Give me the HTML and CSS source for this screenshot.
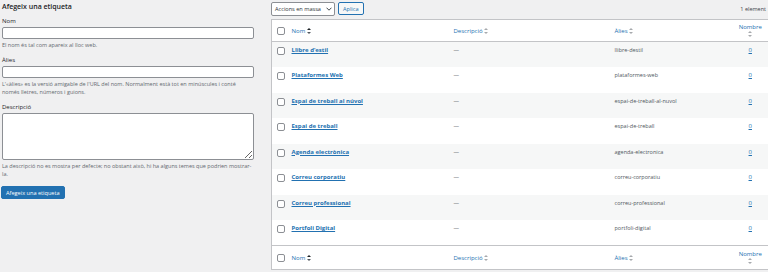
FILE: index.html
```html
<!DOCTYPE html>
<html lang="ca">
<head>
    <meta charset="UTF-8">
    <meta name="viewport" content="width=device-width, initial-scale=1.0">
    <link rel="stylesheet" href="styles.css">
    <title>Etiquetes</title>
</head>
<body>
    <div class="wrap">
        <div class="col-left">
            <h2 class="form-title">Afegeix una etiqueta</h2>
            <div class="form-field">
                <label for="tag-name">Nom</label>
                <input type="text" id="tag-name">
                <p class="help">El nom és tal com apareix al lloc web.</p>
            </div>
            <div class="form-field">
                <label for="tag-slug">Àlies</label>
                <input type="text" id="tag-slug">
                <p class="help">L'«àlies» es la versió amigable de l'URL del nom. Normalment està tot en minúscules i conté només lletres, números i guions.</p>
            </div>
            <div class="form-field">
                <label for="tag-desc">Descripció</label>
                <textarea id="tag-desc"></textarea>
                <p class="help">La descripció no es mostra per defecte; no obstant això, hi ha alguns temes que podrien mostrar-la.</p>
            </div>
            <button class="button-primary">Afegeix una etiqueta</button>
        </div>

        <div class="col-right">
            <div class="tablenav">
                <div class="actions">
                    <div class="select">Accions en massa
                        <svg width="6" height="4" viewBox="0 0 6 4"><path d="M0.5 0.7 L3 3.2 L5.5 0.7" fill="none" stroke="#2c3338" stroke-width="0.9"/></svg>
                    </div>
                    <button class="button">Aplica</button>
                </div>
                <span class="count">1 element</span>
            </div>

            <table class="list-table">
                <thead>
                    <tr>
                        <th class="col-cb"><span class="cb"></span></th>
                        <th class="col-name"><a href="#">Nom <span class="sort sorted"></span></a></th>
                        <th class="col-desc"><a href="#">Descripció <span class="sort"></span></a></th>
                        <th class="col-slug"><a href="#">Àlies <span class="sort"></span></a></th>
                        <th class="col-num"><a href="#">Nombre<br><span class="sort"></span></a></th>
                    </tr>
                </thead>
                <tbody id="rows"></tbody>
                <tfoot>
                    <tr>
                        <th class="col-cb"><span class="cb"></span></th>
                        <th class="col-name"><a href="#">Nom <span class="sort sorted"></span></a></th>
                        <th class="col-desc"><a href="#">Descripció <span class="sort"></span></a></th>
                        <th class="col-slug"><a href="#">Àlies <span class="sort"></span></a></th>
                        <th class="col-num"><a href="#">Nombre<br><span class="sort"></span></a></th>
                    </tr>
                </tfoot>
            </table>
        </div>
    </div>

    <script>
        // tags shown in the list
        const tags = [
            ['Llibre d\u2019estil', 'llibre-destil'],
            ['Plataformes Web', 'plataformes-web'],
            ['Espai de treball al núvol', 'espai-de-treball-al-nuvol'],
            ['Espai de treball', 'espai-de-treball'],
            ['Agenda electrònica', 'agenda-electronica'],
            ['Correu corporatiu', 'correu-corporatiu'],
            ['Correu professional', 'correu-professional'],
            ['Portfoli Digital', 'portfoli-digital']
        ];

        const tbody = document.getElementById('rows');
        tags.forEach(tag => {
            const tr = document.createElement('tr');
            tr.innerHTML = `
                <td class="col-cb"><span class="cb"></span></td>
                <td class="col-name"><a href="#" class="row-title">${tag[0]}</a></td>
                <td class="col-desc">&mdash;</td>
                <td class="col-slug">${tag[1]}</td>
                <td class="col-num"><a href="#">0</a></td>`;
            tbody.appendChild(tr);
        });
    </script>
</body>
</html>
```

FILE: styles.css
```css
*{
    box-sizing: border-box;
    margin: 0;
    padding: 0;
}
body{
    background: #f0f0f1;
    font-family: 'Open Sans', 'Noto Sans', sans-serif;
    font-size: 6px;
    color: #3c434a;
}
a{
    color: #2271b1;
    text-decoration: none;
}

.wrap{
    display: flex;
    gap: 17px;
}

/* left form */
.col-left{
    width: 252px;
    margin-left: 2px;
    flex-shrink: 0;
}
.form-title{
    font-size: 7px;
    font-weight: 600;
    color: #1d2327;
    line-height: 9px;
    margin-top: 2px;
    margin-bottom: 6px;
}
.form-field label{
    display: block;
    line-height: 8px;
    margin-bottom: 2px;
    color: #1d2327;
}
.form-field input,
.form-field textarea{
    display: block;
    width: 100%;
    height: 12px;
    border: 1px solid #8c8f94;
    border-radius: 2px;
    background: #fff;
}
.form-field textarea{
    height: 47px;
    resize: vertical;
}
.help{
    color: #646970;
    font-size: 5.5px;
    line-height: 8px;
    margin-top: 2px;
    margin-bottom: 7px;
}
.button-primary{
    background: #2271b1;
    color: #fff;
    border: 1px solid #2271b1;
    border-radius: 2px;
    font-family: inherit;
    font-size: 5.6px;
    height: 13px;
    padding: 0 4px;
    margin-top: 1px;
    margin-left: -1px;
}

/* right list */
.col-right{
    flex: 1;
}
.tablenav{
    display: flex;
    justify-content: space-between;
    align-items: center;
    height: 19px;
    padding-bottom: 3px;
    padding-top: 1px;
}
.actions{
    display: flex;
    gap: 3px;
    align-items: center;
}
.select{
    display: flex;
    align-items: center;
    justify-content: space-between;
    white-space: nowrap;
    width: 64px;
    height: 14px;
    padding: 0 2px 0 3px;
    background: #fff;
    border: 1px solid #8c8f94;
    border-radius: 2px;
    color: #2c3338;
    font-size: 5.6px;
}
.button{
    height: 13px;
    padding: 0 4px;
    font-family: inherit;
    font-size: 5.6px;
    color: #2271b1;
    background: #f6f7f7;
    border: 1px solid #2271b1;
    border-radius: 2px;
}
.count{
    color: #3c434a;
    font-size: 5.5px;
    padding-right: 2px;
}

.list-table{
    width: 100%;
    border-collapse: collapse;
    background: #fff;
    border: 1px solid #c3c4c7;
    border-right: none;
    table-layout: fixed;
}
.list-table th{
    font-weight: normal;
    text-align: left;
    height: 22px;
    padding: 0 4px;
    vertical-align: middle;
    border-bottom: 1px solid #c3c4c7;
}
.list-table tfoot th{
    height: 24px;
    border-bottom: none;
    border-top: 1px solid #c3c4c7;
}
.list-table td{
    height: 25.5px;
    padding: 4px 4px 0;
    vertical-align: top;
    line-height: 9px;
    color: #50575e;
    font-size: 5.5px;
}
.list-table tbody tr:nth-child(odd){
    background: #f6f7f7;
}

.col-cb{
    width: 16px;
}
.list-table th.col-cb,
.list-table td.col-cb{
    padding: 0 0 0 5px;
}
.list-table td.col-cb{
    padding-top: 5px;
}
.col-name{
    width: 162px;
}
.col-desc{
    width: 161px;
}
.col-slug{
    width: 122px;
}
.list-table .col-num{
    text-align: center;
    line-height: 7px;
}
.list-table td.col-num{
    line-height: 9px;
    font-size: 6px;
}
td.col-num a{
    text-decoration: underline;
}

.cb{
    display: block;
    width: 8px;
    height: 8px;
    border: 1px solid #8c8f94;
    border-radius: 2px;
    background: #fff;
}

.row-title{
    font-weight: 700;
    font-size: 6px;
    text-decoration: underline;
}

.sort{
    display: inline-block;
    width: 4px;
    height: 6px;
    vertical-align: -1px;
    position: relative;
}
.sort::before,
.sort::after{
    content: '';
    position: absolute;
    left: 0;
    border-left: 2px solid transparent;
    border-right: 2px solid transparent;
}
.sort::before{
    top: 0;
    border-bottom: 2.5px solid #a7aaad;
}
.sort::after{
    bottom: 0;
    border-top: 2.5px solid #a7aaad;
}
.sort.sorted::before{
    border-bottom-color: #1d2327;
}
.sort.sorted::after{
    border-top-color: #50575e;
}
```
